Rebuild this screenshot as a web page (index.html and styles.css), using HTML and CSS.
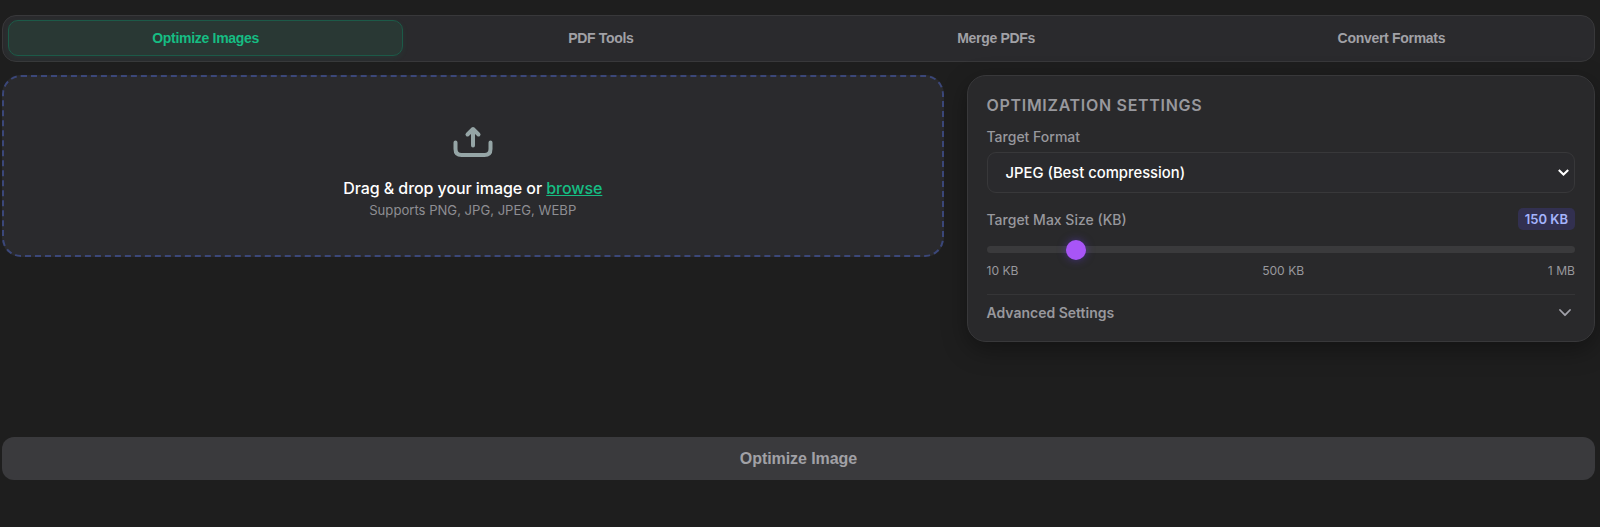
FILE: index.html
```html
<!DOCTYPE html>
<html lang="en">
<head>
    <meta charset="UTF-8">
    <meta name="viewport" content="width=device-width, initial-scale=1.0">
    <title>Optimize Images</title>
    <link rel="stylesheet" href="styles.css">
</head>
<body>

    <!-- Tabs -->
    <div class="tabs">
        <button class="tab active">Optimize Images</button>
        <button class="tab">PDF Tools</button>
        <button class="tab">Merge PDFs</button>
        <button class="tab">Convert Formats</button>
    </div>

    <div class="workspace">
        <!-- Drop zone -->
        <div class="drop-zone">
            <svg class="upload-icon" width="40" height="32" viewBox="0 0 40 32" fill="none" stroke="#95a5a6" stroke-width="4" stroke-linecap="round" stroke-linejoin="round">
                <path d="M2.5 16.5v6.5q0 6 6 6h23q6 0 6-6v-6.5"/>
                <path d="M20 19.5V3M14.500 8.500L20 3l5.500 5.500"/>
            </svg>
            <p class="drop-text">Drag &amp; drop your image or <span class="browse">browse</span></p>
            <p class="drop-hint">Supports PNG, JPG, JPEG, WEBP</p>
        </div>

        <!-- Settings -->
        <div class="settings">
            <h3 class="settings-title">Optimization Settings</h3>
            <div class="label">Target Format</div>
            <div class="select">
                <span class="select-value">JPEG (Best compression)</span>
                <svg width="11" height="7" viewBox="0 0 11 7" fill="none" stroke="#fff" stroke-width="2.1"><path d="M.8 1l4.700 4.500L10.200 1"/></svg>
            </div>

            <div class="size-row">
                <span class="label size-label">Target Max Size (KB)</span>
                <span class="badge">150 KB</span>
            </div>
            <div class="slider">
                <div class="thumb" style="left: 13.450%"></div>
            </div>
            <div class="marks">
                <span>10 KB</span>
                <span>500 KB</span>
                <span>1 MB</span>
            </div>

            <div class="advanced">
                <span>Advanced Settings</span>
                <svg width="12" height="8" viewBox="0 0 12 8" fill="none" stroke="#a1a1aa" stroke-width="1.8" stroke-linecap="round" stroke-linejoin="round"><path d="M1 1l5 5.200L11 1"/></svg>
            </div>
        </div>
    </div>

    <button class="optimize-btn" disabled>Optimize Image</button>

</body>
</html>
```
FILE: styles.css
```css
* {
    box-sizing: border-box;
}

body {
    font-family: Inter, sans-serif;
    background-color: #1e1e1e;
    margin: 0;
    padding: 15px 5px 0 2px;
    color: #fff;
}

.tabs {
    display: flex;
    height: 47px;
    padding: 4px 5px 5px;
    background-color: #2a2a2d;
    border: 1px solid #38383a;
    border-radius: 14px;
}

.tab {
    flex: 1;
    padding: 0 0 1px;
    background: none;
    border: 1px solid transparent;
    border-radius: 10px;
    color: #a1a1a6;
    font-family: "Liberation Sans", Arial, sans-serif;
    font-size: 14px;
    font-weight: bold;
    letter-spacing: -0.3px;
}

.tab.active {
    background-color: #293834;
    border-color: #1c5a48;
    box-shadow: 0 2px 6px rgba(22, 189, 131, 0.08);
    color: #16bd83;
}

.workspace {
    display: grid;
    grid-template-columns: 941.5px 628.5px;
    gap: 23px;
    align-items: start;
    height: 362px;
    padding-top: 13px;
}

.drop-zone {
    display: flex;
    flex-direction: column;
    align-items: center;
    height: 182px;
    padding-top: 49px;
    background-color: #2a2a2d;
    border: 2px dashed #3b4779;
    border-radius: 19px;
}

.upload-icon {
    display: block;
}

.drop-text {
    margin: 18px 0 0;
    font-size: 16px;
    font-weight: 500;
    line-height: 24px;
    letter-spacing: -0.07px;
}

.browse {
    color: #16bd83;
    text-decoration: underline;
}

.drop-hint {
    margin: 0;
    color: #8e8e93;
    font-size: 13.1px;
    line-height: 20px;
}

.settings {
    height: 267px;
    padding: 18px 19px 0;
    background-color: #29292b;
    border: 1px solid #38383a;
    border-radius: 19px;
    box-shadow: 0 8px 24px rgba(0, 0, 0, 0.35);
}

.settings-title {
    margin: 0 0 11px;
    color: #98989d;
    font-size: 16px;
    font-weight: 600;
    line-height: 22px;
    letter-spacing: 0.7px;
    text-transform: uppercase;
}

.label {
    color: #98989d;
    font-size: 14px;
    font-weight: 500;
    line-height: 20px;
}

.size-label {
    padding-top: 1px;
}

.select {
    display: flex;
    align-items: center;
    justify-content: space-between;
    height: 41px;
    margin-top: 5px;
    padding: 0 5px 0 18px;
    background-color: #2a2a2d;
    border: 1px solid #38383a;
    border-radius: 9px;
    font-size: 14.8px;
    font-weight: 500;
}

.size-row {
    display: flex;
    align-items: center;
    justify-content: space-between;
    height: 22px;
    margin-top: 15px;
}

.badge {
    padding: 0 7px;
    background-color: #323050;
    border-radius: 5px;
    color: #a5b4fc;
    font-size: 13px;
    font-weight: 600;
    line-height: 22px;
}

.slider {
    position: relative;
    height: 7px;
    margin-top: 16px;
    background-color: #3a3a3c;
    border-radius: 4px;
}

.thumb {
    position: absolute;
    top: -6px;
    width: 20px;
    height: 20px;
    background-color: #a855f7;
    border-radius: 50%;
    box-shadow: 0 0 8px rgba(99, 60, 220, 0.5);
}

.marks {
    display: flex;
    justify-content: space-between;
    margin-top: 10px;
    color: #98989d;
    font-size: 12.1px;
    line-height: 16px;
}

.advanced {
    display: flex;
    align-items: center;
    justify-content: space-between;
    margin-top: 15px;
    padding: 8px 4px 0 0;
    border-top: 1px solid #353537;
    color: #98989d;
    font-size: 14px;
    font-weight: 600;
    line-height: 20px;
}

.optimize-btn {
    display: block;
    width: 100%;
    height: 43px;
    margin-top: 13px;
    padding: 0;
    background-color: #3a3a3d;
    border: none;
    border-radius: 12px;
    color: #a1a1a6;
    font-family: "Liberation Sans", Arial, sans-serif;
    font-size: 16px;
    font-weight: bold;
    letter-spacing: -0.07px;
}
```
